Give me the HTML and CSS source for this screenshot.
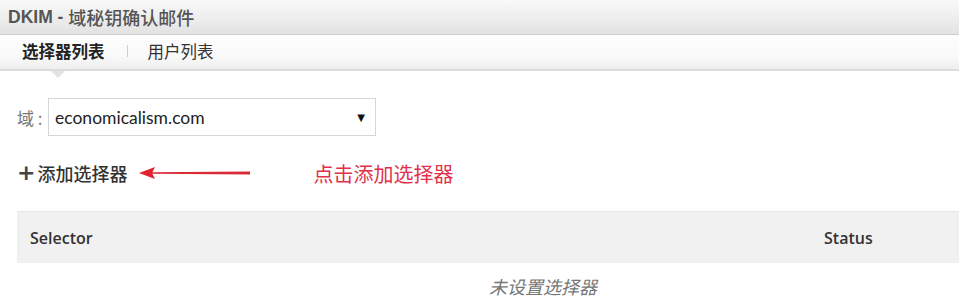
FILE: index.html
```html
<!DOCTYPE html>
<html lang="zh-CN">
<head>
<meta charset="utf-8">
<title>DKIM</title>
<link rel="stylesheet" href="styles.css">
</head>
<body>
<div class="titlebar"><span class="t-latin">DKIM - </span><span class="t-cjk">域秘钥确认邮件</span></div>
<div class="tabbar">
  <div class="tab active">选择器列表</div>
  <div class="tab-sep"></div>
  <div class="tab">用户列表</div>
</div>
<div class="content">
  <div class="domain-row">
    <span class="domain-label">域 :</span>
    <div class="select">
      <span class="select-value">economicalism.com</span>
      <span class="select-arrow">▼</span>
    </div>
  </div>
  <div class="add-row">
    <span class="add-btn"><span class="plus">+</span>添加选择器</span>
    <svg class="arrow" width="114" height="14" viewBox="0 0 114 14">
      <path d="M14 6.2 L112 5.6 L112 8.4 L14 7.8 Z" fill="#d92a35"/>
      <path d="M1 7 L17 1 L14 7 L17 13 Z" fill="#e1232f"/>
    </svg>
    <span class="hint">点击添加选择器</span>
  </div>
  <div class="table">
    <div class="thead">
      <div class="th th-selector">Selector</div>
      <div class="th th-status">Status</div>
    </div>
    <div class="empty">未设置选择器</div>
  </div>
</div>
</body>
</html>
```
FILE: styles.css
```css
html, body { margin: 0; padding: 0; }
body {
  width: 959px;
  height: 299px;
  overflow: hidden;
  background: #fff;
  font-family: "Noto Sans CJK SC", sans-serif;
  color: #333;
}
.titlebar {
  height: 35px;
  box-sizing: border-box;
  padding-left: 8px;
  display: flex;
  align-items: center;
  background: linear-gradient(#f9f9f9, #ececec 60%, #e2e2e2);
  border-bottom: 1px solid #cfcfcf;
  color: #555;
}
.t-latin { font-family: "Liberation Sans", sans-serif; font-weight: bold; white-space: pre; font-size: 17.5px; }
.t-cjk { font-family: "Noto Sans CJK SC", serif; font-weight: 500; font-size: 18px; }
.tabbar {
  height: 36px;
  box-sizing: border-box;
  display: flex;
  align-items: center;
  padding-left: 22px;
  padding-bottom: 3px;
  background: linear-gradient(#fdfdfd, #fafafa 60%, #eeeeee);
  border-bottom: 2px solid #dcdcdc;
  position: relative;
  font-size: 16.5px;
}
.tab { color: #333; line-height: 20px; position: relative; }
.tab.active { font-weight: bold; color: #222; }
.tab.active::after {
  content: "";
  position: absolute;
  left: 29px;
  top: 30px;
  width: 0; height: 0;
  border-left: 7px solid transparent;
  border-right: 7px solid transparent;
  border-top: 7px solid #e3e3e3;
}
.tab-sep {
  width: 1px;
  height: 12px;
  background: #cfcfcf;
  margin: 0 20px 0 22px;
}
.content { padding: 27px 0 0 17px; }
.domain-row { display: flex; align-items: center; }
.domain-label { color: #777; font-size: 17px; width: 31px; }
.select {
  width: 328px;
  height: 38px;
  box-sizing: border-box;
  border: 1px solid #d6d6d6;
  display: flex;
  align-items: center;
  justify-content: space-between;
  padding: 0 10px 0 6px;
}
.select-value { font-family: "Lato", sans-serif; font-size: 17.5px; color: #222; }
.select-arrow { font-size: 10px; color: #111; font-family: "DejaVu Sans", sans-serif; }
.add-row {
  display: flex;
  align-items: center;
  margin-top: 24px;
  height: 26px;
}
.add-btn { font-size: 18px; font-weight: 500; color: #333; display: flex; align-items: center; }
.plus { font-family: "DejaVu Sans", sans-serif; font-size: 22px; font-weight: bold; color: #444; margin-right: 2px; line-height: 20px; }
.arrow { margin-left: 11px; }
.hint { margin-left: 61px; color: #e3304a; font-size: 20px; }
.table { margin-top: 25px; }
.thead {
  height: 52px;
  box-sizing: border-box;
  background: #f1f1f1;
  border-top: 1px solid #e6e6e6;
  display: flex;
  align-items: center;
  font-family: "Open Sans", sans-serif;
  font-size: 16px;
  font-weight: 600;
  color: #333;
}
.th-selector { padding-left: 13px; flex: 1; }
.th-status { width: 135px; }
.empty {
  padding-left: 472px;
  padding-top: 10px;
  font-style: italic;
  color: #777;
  font-size: 18px;
}
```
